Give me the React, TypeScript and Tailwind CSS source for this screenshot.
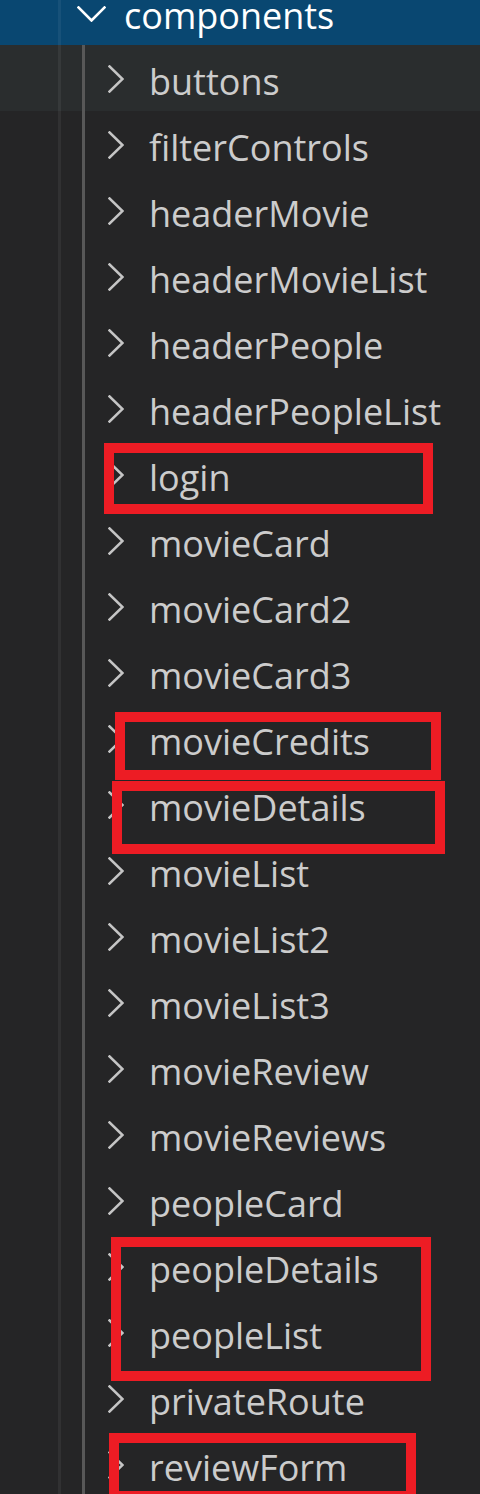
import React from "react"

const folders = [
  "buttons",
  "filterControls",
  "headerMovie",
  "headerMovieList",
  "headerPeople",
  "headerPeopleList",
  "login",
  "movieCard",
  "movieCard2",
  "movieCard3",
  "movieCredits",
  "movieDetails",
  "movieList",
  "movieList2",
  "movieList3",
  "movieReview",
  "movieReviews",
  "peopleCard",
  "peopleDetails",
  "peopleList",
  "privateRoute",
  "reviewForm",
]

// red annotation boxes drawn over the tree
const marks = [
  { left: 104, top: 443, width: 329, height: 71 },
  { left: 115, top: 712, width: 326, height: 68 },
  { left: 112, top: 781, width: 333, height: 73 },
  { left: 111, top: 1237, width: 320, height: 144 },
  { left: 109, top: 1433, width: 307, height: 68 },
]

function ChevronRight() {
  return (
    <svg width="16" height="28" viewBox="0 0 16 28" fill="none" className="shrink-0">
      <path d="M1.5 1.5L14.5 14L1.5 26.5" stroke="#c5c5c5" strokeWidth="2.6" strokeLinecap="square" />
    </svg>
  )
}

function ChevronDown() {
  return (
    <svg width="29" height="16" viewBox="0 0 29 16" fill="none" className="shrink-0">
      <path d="M1.5 1.5L14.5 14.5L27.5 1.5" stroke="#ffffff" strokeWidth="2.6" strokeLinecap="square" />
    </svg>
  )
}

export default function App() {
  return (
    <div
      className="relative w-[480px] h-[1494px] overflow-hidden bg-[#252526]"
      style={{ fontFamily: '"Open Sans", "Noto Sans", sans-serif' }}
    >
      <div className="-mt-[21px] flex flex-col">
        <div className="flex h-[66px] items-center bg-[#094771]">
          <div className="w-[58px] shrink-0" />
          <div className="h-full w-[3px] shrink-0 bg-white/[0.06]" />
          <div className="w-[16px] shrink-0" />
          <div className="pt-[3px]">
            <ChevronDown />
          </div>
          <div className="w-[18px] shrink-0" />
          <span className="pt-[8px] text-[36px] leading-[66px] text-white">components</span>
        </div>

        {folders.map((name, i) => (
          <div key={name} className={`flex h-[66px] items-center ${i === 0 ? "bg-[#2a2d2e]" : ""}`}>
            <div className="w-[58px] shrink-0" />
            <div className="h-full w-[3px] shrink-0 bg-white/[0.06]" />
            <div className="w-[21px] shrink-0" />
            <div className="h-full w-[3px] shrink-0 bg-[#585858]" />
            <div className="w-[23px] shrink-0" />
            <div className="pt-[1px]">
              <ChevronRight />
            </div>
            <div className="w-[25px] shrink-0" />
            <span className="pt-[8px] text-[36px] leading-[66px] text-[#cccccc]">{name}</span>
          </div>
        ))}
      </div>

      {marks.map((m, i) => (
        <div
          key={i}
          className="absolute border-[10px] border-[#ed1c24]"
          style={{ left: m.left, top: m.top, width: m.width, height: m.height }}
        />
      ))}
    </div>
  )
}
